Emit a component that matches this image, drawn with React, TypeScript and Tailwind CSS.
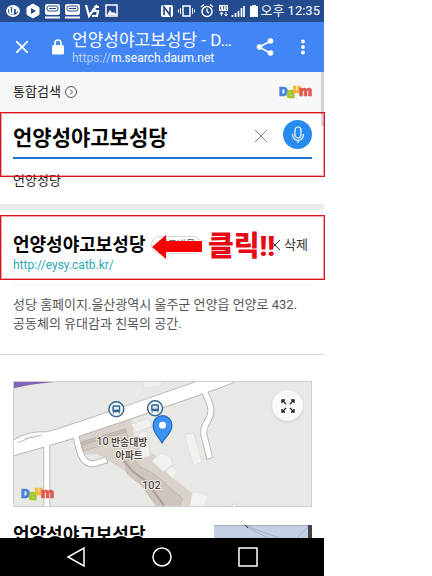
import React, { useState } from 'react';

interface IconProps {
  className?: string;
}

const DaumLogo: React.FC<IconProps> = ({ className }) => (
  <svg viewBox="0 0 33 18" role="img" aria-label="Daum" className={className}>
    <g fontFamily="Inter, sans-serif" fontWeight="900" strokeWidth=".6">
      <text x="0" y="13" fontSize="12" fill="#4a82e0" stroke="#4a82e0">D</text>
      <text x="8" y="15" fontSize="13" fill="#a4c520" stroke="#a4c520">a</text>
      <text x="14" y="10" fontSize="12" fill="#f8b62d" stroke="#f8b62d">u</text>
      <text x="20" y="13" fontSize="14" fill="#e3594f" stroke="#e3594f">m</text>
    </g>
  </svg>
);

const StatusBar: React.FC = () => (
  <div className="flex h-[22px] shrink-0 items-center justify-between bg-[#244b8e] pl-1.5 pr-1 text-white">
    <svg viewBox="0 0 114 16" className="h-4 w-[114px]" fill="none" stroke="currentColor">
      <ellipse cx="7" cy="8" rx="6" ry="5" strokeWidth="1.8" />
      <path d="M4 5v4q0 2 3 1.500V5h3q2 2 0 4" strokeWidth="1.800" />
      <path d="m27 1 6 3.500v7L27 15l-6-3.500v-7z" fill="currentColor" />
      <path d="m25 5 5 3-5 3z" fill="#244b8e" stroke="none" />
      {[39, 59].map((x) => (
        <g key={x}>
          <rect x={x} y="1" width="15" height="11" rx="2" fill="currentColor" stroke="none" />
          <rect x={x + 2} y="3" width="11" height="5" rx="2" stroke="#244b8e" strokeWidth="1" />
          <path d={`M${x + 4} 5.500h7`} stroke="#244b8e" strokeWidth="1" />
          <path d={`M${x} 14.500h15`} strokeWidth="2" />
        </g>
      ))}
      <path d="m80 2 3 11 8-11M93 4h-4l-1 4h4l-1 5h-5" strokeWidth="2.200" />
      <rect x="100" y="2" width="11" height="11" strokeWidth="1.500" />
      <path d="m101 12 3-5 2 3 2-1 3 3z" fill="currentColor" stroke="none" />
    </svg>
    <div className="flex items-center">
      <svg viewBox="0 0 97 16" className="h-4 w-[97px]" fill="none" stroke="currentColor">
        <rect x="0" y="2" width="12" height="12" rx="2" fill="currentColor" stroke="none" />
        <path d="M3 12V4l6 8V4" stroke="#244b8e" strokeWidth="1.600" />
        <rect x="22" y="3" width="7" height="10" strokeWidth="1.500" />
        <path d="M19.500 5v6M17.500 6.500v3M31.500 5v6M33.500 6.500v3" />
        <circle cx="46" cy="8.500" r="5" strokeWidth="1.500" />
        <path d="M46 5.500v3l2 1.500M40 4l3-2.500M52 4l-3-2.500" strokeWidth="1.300" />
        <rect x="58" y="2" width="9" height="6" fill="currentColor" stroke="none" />
        <path d="M59.500 3.500V6.500h1M61.500 3.500h2M62.500 3.500v3M66 3.500h-1v3h1" stroke="#244b8e" strokeWidth=".8" />
        <path d="M60.500 9v4M59 11l1.500-2 1.500 2M65 9v4M63.500 11l1.500 2 1.500-2" />
        <path d="M71.500 14v-2M74.500 14v-4M77.500 14V8M80.500 14V5M83 14V3" strokeWidth="1.700" />
        <path d="M89 3h2V2h4v1h2v11h-8z" fill="currentColor" stroke="none" />
      </svg>
      <span className="ml-0.5 whitespace-nowrap text-[13px] leading-5">오후 12:35</span>
    </div>
  </div>
);

const BrowserBar: React.FC = () => (
  <header className="flex h-[50px] shrink-0 items-center bg-[#4285f4] pl-4 pr-3 text-white">
    <button aria-label="닫기" className="shrink-0">
      <svg viewBox="0 0 12 12" className="size-3" stroke="currentColor" strokeWidth="1.800">
        <path d="m0 0 12 12M12 0 0 12" />
      </svg>
    </button>
    <svg viewBox="0 0 12 16" className="ml-6 h-4 w-3 shrink-0" fill="currentColor">
      <rect x="0" y="6" width="12" height="9.500" rx="1.500" />
      <path d="M3 7V4a3 3 0 0 1 6 0v3" fill="none" stroke="currentColor" strokeWidth="1.600" />
    </svg>
    <div className="ml-2 w-40 min-w-0 pt-0.5">
      <h1 className="whitespace-nowrap text-[17px] leading-5">언양성야고보성당 - D…</h1>
      <p className="whitespace-nowrap font-[Roboto] text-[12px] leading-4">
        <span className="text-[#b3cefb]">https://</span>m.search.daum.net
      </p>
    </div>
    <button aria-label="공유" className="ml-auto shrink-0">
      <svg viewBox="0 0 18 20" className="h-5 w-[18px]" fill="currentColor">
        <path d="M15 4 3 10l12 6.500" fill="none" stroke="currentColor" strokeWidth="1.600" />
        <circle cx="14.500" cy="4" r="2.800" />
        <circle cx="3.500" cy="10" r="2.800" />
        <circle cx="14.500" cy="16" r="2.800" />
      </svg>
    </button>
    <button aria-label="메뉴" className="ml-5 shrink-0">
      <svg viewBox="0 0 18 16" className="h-4 w-[18px]" fill="currentColor">
        <circle cx="9" cy="2.500" r="1.900" />
        <circle cx="9" cy="8" r="1.900" />
        <circle cx="9" cy="13.500" r="1.900" />
      </svg>
    </button>
  </header>
);

const SearchBox: React.FC = () => {
  const [query, setQuery] = useState('언양성야고보성당');

  return (
    <form className="relative h-[65px] pl-[13px] pr-3 pt-2" onSubmit={(e) => e.preventDefault()}>
      <div className="flex h-[39px] items-start border-b-2 border-[#1b75cc]">
        <input
          aria-label="검색어"
          value={query}
          onChange={(e) => setQuery(e.target.value)}
          className="h-8 min-w-0 flex-1 bg-transparent text-[21px] font-bold text-black outline-none"
        />
        <button type="button" aria-label="지우기" onClick={() => setQuery('')} className="mt-2.5 shrink-0">
          <svg viewBox="0 0 12 12" className="size-3" stroke="#858585">
            <path d="m0 0 12 12M12 0 0 12" />
          </svg>
        </button>
        <button type="button" aria-label="음성 검색" className="ml-4 flex size-[29px] shrink-0 items-center justify-center rounded-full bg-[#278bf0]">
          <svg viewBox="0 0 12 18" className="h-[18px] w-3" fill="none" stroke="white" strokeWidth="1.200">
            <rect x="3" y="1" width="6" height="11" rx="3" />
            <path d="M.6 8v1a5.400 5.400 0 0 0 10.800 0V8M6 14.500V17" />
          </svg>
        </button>
      </div>
      <Highlight />
    </form>
  );
};

const Highlight: React.FC = () => (
  <div className="pointer-events-none absolute inset-y-0 left-0 -right-px z-10 border border-[#d8151b] outline outline-[#d8151b]/40 -outline-offset-2" />
);

const SiteResult: React.FC = () => (
  <article>
    <div className="relative flex h-[65px] items-start justify-between pl-[13px] pr-4 pt-4">
      <div>
        <h2 className="flex items-center text-[18px] font-bold leading-7 text-black">
          언양성야고보성당
          <span className="ml-1.5 rounded-full border border-gray-300 px-1.5 text-[10px] font-normal leading-4 text-gray-600">최근방문</span>
        </h2>
        <a href="http://eysy.catb.kr/" className="block font-[Roboto] text-[12px] leading-3 text-[#2aa9b5]">
          http://eysy.catb.kr/
        </a>
      </div>
      <button className="mt-1 flex items-center gap-1 text-[13px] leading-5 text-[#333]">
        <svg viewBox="0 0 10 10" className="size-2.5" stroke="currentColor">
          <path d="m0 0 10 10M10 0 0 10" />
        </svg>
        삭제
      </button>
      <Highlight />
      {/* Click marker */}
      <div className="pointer-events-none absolute left-[152px] top-3 z-20 flex items-center gap-1.5 text-[#f90000]">
        <svg viewBox="0 0 50 24" className="h-6 w-[50px]" fill="currentColor">
          <path d="M0 12 14 0v6h36v11H14v7z" />
        </svg>
        <strong className="whitespace-nowrap text-[28px] font-black leading-10 text-[#e60b14]">클릭!!</strong>
      </div>
    </div>
    <p className="ml-[13px] mr-3 mt-1 border-t border-[#f3f3f3] pb-5 pt-2.5 text-[13px] leading-[19px] text-[#555]">
      성당 홈페이지.울산광역시 울주군 언양읍 언양로 432. 공동체의 유대감과 친목의 공간.
    </p>
  </article>
);

const BusStop: React.FC<{ x: number; y: number }> = ({ x, y }) => (
  <g transform={`translate(${x} ${y})`}>
    <circle r="7.500" fill="#f7fafb" stroke="#34658f" strokeWidth="1.500" />
    <rect x="-4" y="-4" width="8" height="7" rx="1.500" fill="#34658f" />
    <rect x="-2.500" y="-2.500" width="5" height="3" fill="#dce8f0" />
    <path d="M-3 3v1.500M3 3v1.500M-2.500 1.800h1M1.500 1.800h1" stroke="#34658f" />
  </g>
);

const LocationMap: React.FC = () => (
  <div className="relative ml-[13px] mr-3 h-[126px] overflow-hidden border border-[#cfcfcf]">
    <svg viewBox="0 0 299 126" preserveAspectRatio="xMidYMid slice" className="block size-full bg-[#e8e8e4]">
      <path d="M0 0h48Q20 2 0 7z" fill="#8066b8" />
      <path d="m64 53 54-17 4 24 21 15 10 17 26 20-1 14h-36l-13-24-19-13-26-16-18 1z" fill="#dad3cc" />
      <path d="m180 113 4-1 10 4-3 10h-14z" fill="#f3f3f1" />
      <g stroke="#b7b0aa" strokeWidth=".8">
        <path d="m68 61 44-13 3 8-45 14z" fill="#d3cac2" />
        <path d="m68 61 44-13 1 3-44 13z" fill="#c5bbb3" />
        <path d="m110 76 5-4 12 14 14 7 15 13 14 12-4 8h-20l-8-8-9-13-15-12z" fill="#d0c5bd" />
        <path d="m110 79 10 12 14 10 9 13 8 11" fill="none" stroke="#aaa098" strokeWidth="2" />
      </g>
      <g fill="#f1f1ef" stroke="#dadad7" strokeWidth=".8">
        <path d="m118 43 17-6 4 8-16 6zM125 52l9-2 3 25-9 2zM139 80l9-8 10 4 2 8-10 7zM158 84l7 7-5 7-7-7z" />
        <path d="m172 53 9-1 3 10 2 7 3 12-8 4-6-18-2-8z" />
        <path d="M130 0v6l6 1 4-2 5 1 6-6z" />
      </g>
      <g fill="none" strokeLinejoin="round">
        <path d="M33 58v70M61 50l5 20q4 13 14 13l14-4M190 6l6 14q5 10-1 20-6 8-3 17l5 21" stroke="#b9b9b7" strokeWidth="7" />
        <path d="M-5 64q22-15 43-10" stroke="#b9b9b7" strokeWidth="5" />
        <path d="M-5 69 47 54l66-22 92-32 20-8" stroke="#b9b9b7" strokeWidth="15" />
        <path d="M33 58v70M61 50l5 20q4 13 14 13l13-4M190 6l6 14q5 10-1 20-6 8-3 17l5 20" stroke="white" strokeWidth="5" />
        <path d="M-5 64q22-15 43-10" stroke="white" strokeWidth="3" />
        <path d="M-5 69 47 54l66-22 92-32 20-8" stroke="white" strokeWidth="13" />
        <path d="m4 62 11-5 13-3" stroke="#b9b9b7" />
      </g>
      <path d="m218 126 4-3 3 3" fill="white" stroke="#ccc" />
      <BusStop x={103} y={28} />
      <BusStop x={142} y={27} />
      <path d="M149 62c-3-6-9-10-9-18a9.500 9.500 0 0 1 19 0c0 8-7 12-10 18z" fill="#3b93f5" stroke="#2567b4" strokeWidth="1.200" />
      <circle cx="149.500" cy="44" r="3.500" fill="white" />
      <g fontSize="11" fill="#302820" stroke="#f4f1ed" strokeWidth="2" paintOrder="stroke">
        <text x="83" y="64">10</text>
        <text x="116" y="65" fontSize="10" fontWeight="500" textAnchor="middle">반송대방</text>
        <text x="116" y="78" fontSize="10" fontWeight="500" textAnchor="middle">아파트</text>
        <text x="129" y="108">102</text>
      </g>
    </svg>
    <DaumLogo className="absolute bottom-[3px] left-[7px] h-[18px] w-[33px]" />
    <button aria-label="지도 확대" className="absolute right-2 top-2 flex size-[31px] items-center justify-center rounded-full bg-[#f9f9f9] shadow-sm">
      <svg viewBox="0 0 14 14" className="size-3.5" fill="none" stroke="#222" strokeWidth="1.300">
        <path d="M1 4V1h3M1 1l4 4M10 1h3v3M13 1 9 5M1 10v3h3M1 13l4-4M10 13h3v-3M13 13 9 9" />
      </svg>
    </button>
  </div>
);

const NavigationBar: React.FC = () => (
  <nav className="z-10 flex h-[38px] shrink-0 items-center justify-center gap-[66px] bg-black text-white">
    <button aria-label="뒤로">
      <svg viewBox="0 0 20 20" className="size-5" fill="none" stroke="currentColor" strokeWidth="1.500">
        <path d="M18 1v18L2 10z" />
      </svg>
    </button>
    <button aria-label="홈">
      <svg viewBox="0 0 20 20" className="size-5" fill="none" stroke="currentColor" strokeWidth="1.500">
        <circle cx="10" cy="10" r="9" />
      </svg>
    </button>
    <button aria-label="최근 앱">
      <svg viewBox="0 0 20 20" className="size-5" fill="none" stroke="currentColor" strokeWidth="1.500">
        <rect x="1" y="1" width="18" height="18" />
      </svg>
    </button>
  </nav>
);

const App: React.FC = () => {
  return (
    <div className="min-h-screen bg-white">
      <div className="flex h-screen w-3/4 flex-col bg-white font-[Roboto,'Noto_Sans_CJK_KR',sans-serif]">
        <StatusBar />
        <BrowserBar />

        <main className="relative min-h-0 flex-1 overflow-y-clip">
          <div className="absolute right-0 top-0 z-10 h-[54px] w-[3px] bg-black/15" />
          <div className="flex h-10 items-center justify-between bg-[#f7f7f7] pl-[13px] pr-3">
            <a href="#all" className="flex items-center gap-1 text-[13px] leading-5 text-[#222]">
              통합검색
              <svg viewBox="0 0 12 12" className="size-3" fill="none" stroke="#555">
                <circle cx="6" cy="6" r="5.500" />
                <path d="m5 3.500 2.500 2.500L5 8.500" />
              </svg>
            </a>
            <DaumLogo className="h-[18px] w-[33px]" />
          </div>

          <SearchBox />

          <div className="-mt-1.5 flex h-[33px] items-start px-[13px]">
            <a href="#related" className="text-[13px] leading-5 text-[#222]">언양성당</a>
          </div>
          <div className="mb-[5px] h-1.5 bg-[#ebebeb]" />

          <SiteResult />

          {/* Place */}
          <section className="mt-px border-t border-[#d5d5d5] pt-[26px]">
            <LocationMap />
            <div className="flex items-start justify-between pl-[13px] pr-3 pt-[18px]">
              <h2 className="-mt-1 text-[18px] font-bold leading-7 text-black">언양성야고보성당</h2>
              <svg viewBox="0 0 98 70" preserveAspectRatio="xMidYMid slice" className="h-[70px] w-[98px]">
                <rect width="98" height="70" fill="#c3d0e4" />
                <path d="M0 0h98v1H0z" fill="#a3acba" />
                <path d="m30 0 24 9 40 13M33 2l38 20M94 2 78 18" fill="none" stroke="#929baa" strokeWidth=".6" />
                <path d="m31 0 3 3" stroke="#333" strokeWidth="1" />
                <path d="M94 0h4v70h-4z" fill="#444048" />
              </svg>
            </div>
          </section>
        </main>

        <NavigationBar />
      </div>
    </div>
  );
};

export default App;
